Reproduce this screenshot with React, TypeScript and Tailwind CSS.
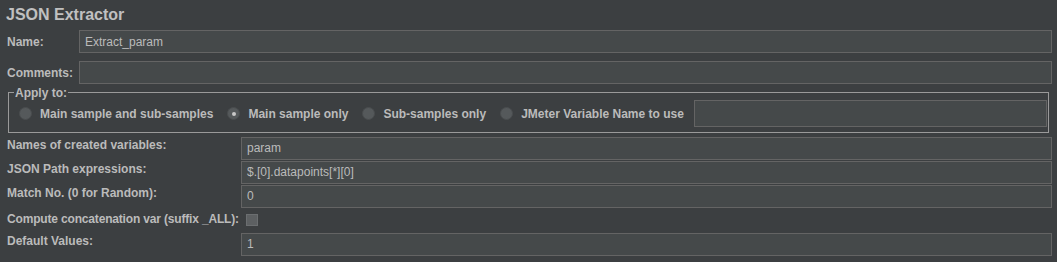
import React from "react";

const font = { fontFamily: '"Liberation Sans", Arial, sans-serif' };

function Field({ value = "" }: { value?: string }) {
  return (
    <div className="flex-1 h-[23px] bg-[#45494a] border border-[#646464] flex items-center px-[5px] text-[12px] text-[#bbbbbb]">
      {value}
    </div>
  );
}

function Radio({ label, checked = false }: { label: string; checked?: boolean }) {
  return (
    <div className="flex items-center gap-[8px]">
      <div className="w-[13px] h-[13px] rounded-full bg-[#55595b] border border-[#4a4d4f] flex items-center justify-center">
        {checked && <div className="w-[4px] h-[4px] rounded-full bg-[#c8c8c8]" />}
      </div>
      <span className="text-[12px] font-bold text-[#bbbbbb]">{label}</span>
    </div>
  );
}

function Row({ label, value }: { label: string; value: string }) {
  return (
    <div className="flex items-center h-[24px]">
      <div className="w-[241px] text-[12px] font-bold text-[#bbbbbb] pl-[7px] -mt-[6px]">{label}</div>
      <Field value={value} />
    </div>
  );
}

export default function App() {
  return (
    <div className="w-[1057px] h-[262px] bg-[#3c3f41] pr-[5px]" style={font}>
      <div className="h-[30px] pl-[6px] pt-[3px] text-[16px] font-bold text-[#c0c0c0]">JSON Extractor</div>
      <div className="flex items-center h-[23px]">
        <div className="w-[79px] pl-[7px] text-[12px] font-bold text-[#bbbbbb]">Name:</div>
        <Field value="Extract_param" />
      </div>
      <div className="flex items-center h-[23px] mt-[8px]">
        <div className="w-[79px] pl-[7px] text-[12px] font-bold text-[#bbbbbb]">Comments:</div>
        <Field />
      </div>
      <div className="relative ml-[8px] mr-[3px] mt-[8px] h-[41px] border border-[#9a9a9a] flex items-center pl-[10px] pr-[1px] pt-[2px]">
        <span className="absolute -top-[9px] left-[5px] bg-[#3c3f41] px-[1px] text-[12px] font-bold text-[#bbbbbb]">Apply to:</span>
        <div className="flex items-center gap-[14px]">
          <Radio label="Main sample and sub-samples" />
          <Radio label="Main sample only" checked />
          <Radio label="Sub-samples only" />
          <Radio label="JMeter Variable Name to use" />
        </div>
        <div className="ml-[10px] flex-1 h-[27px] bg-[#45494a] border border-[#646464]" />
      </div>
      <div className="mt-[3px]">
        <Row label="Names of created variables:" value="param" />
        <Row label="JSON Path expressions:" value="$.[0].datapoints[*][0]" />
        <Row label="Match No. (0 for Random):" value="0" />
        <div className="flex items-center h-[24px]">
          <div className="w-[241px] text-[12px] font-bold text-[#bbbbbb] pl-[7px] whitespace-nowrap tracking-[-0.17px] -mt-[2px]">
            Compute concatenation var (suffix _ALL):
          </div>
          <div className="ml-[5px] w-[12px] h-[12px] bg-[#5d6062] border border-[#6b6e70]" />
        </div>
        <Row label="Default Values:" value="1" />
      </div>
    </div>
  );
}
